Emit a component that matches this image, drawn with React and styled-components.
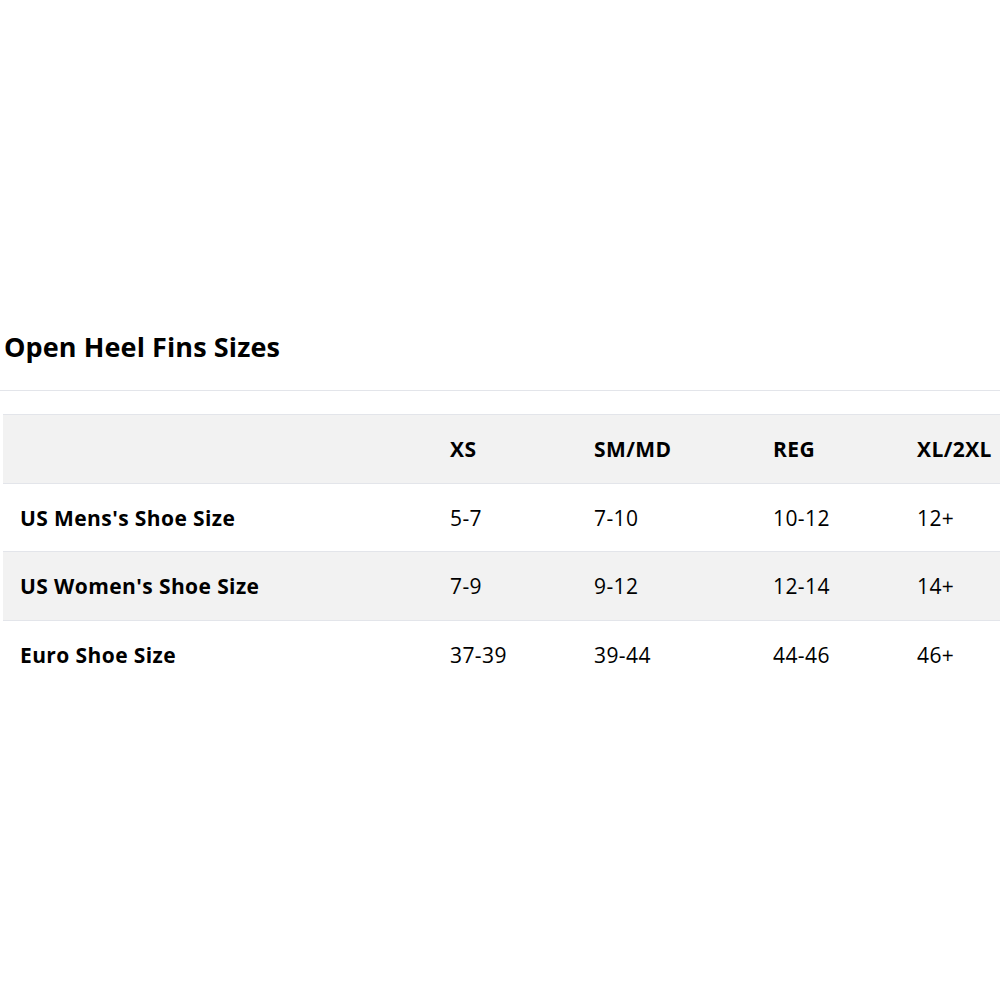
import React from "react";
import styled, { createGlobalStyle } from "styled-components";

const Global = createGlobalStyle`
  html, body { margin: 0; padding: 0; background: #fff; }
  body { width: 1000px; height: 1000px; overflow: hidden; font-family: "Open Sans", "Noto Sans", sans-serif; color: #000; }
`;

const Page = styled.div`
  padding-top: 326px;
`;

const Title = styled.h2`
  margin: 0 0 0 4px;
  font-size: 27px;
  font-weight: 700;
  line-height: 42px;
  letter-spacing: 0.1px;
`;

const Divider = styled.hr`
  margin: 22px 0 23px 0;
  border: 0;
  border-top: 1px solid #e3e5ea;
`;

const TableWrap = styled.div`
  margin-left: 3px;
  width: 1040px;
`;

const Table = styled.table`
  border-collapse: collapse;
  table-layout: fixed;
  width: 1040px;
  font-size: 21px;
  letter-spacing: 0.4px;
`;

const Row = styled.tr`
  background: ${(p) => (p.$shade ? "#f2f2f2" : "#fff")};
  border-top: 1px solid #e3e5ea;
  height: ${(p) => p.$h}px;
`;

const Cell = styled.td`
  padding: 0 0 0 17px;
  font-weight: ${(p) => (p.$bold ? 700 : 400)};
  vertical-align: middle;
  white-space: nowrap;
`;

const cols = [430, 144, 179, 144, 143];
const header = ["", "XS", "SM/MD", "REG", "XL/2XL"];
const rows = [
  ["US Mens's Shoe Size", "5-7", "7-10", "10-12", "12+"],
  ["US Women's Shoe Size", "7-9", "9-12", "12-14", "14+"],
  ["Euro Shoe Size", "37-39", "39-44", "44-46", "46+"],
];

export default function App() {
  return (
    <>
      <Global />
      <Page>
        <Title>Open Heel Fins Sizes</Title>
        <Divider />
        <TableWrap>
          <Table>
            <colgroup>
              {cols.map((w, i) => (
                <col key={i} style={{ width: w }} />
              ))}
            </colgroup>
            <tbody>
              <Row $shade $h={69}>
                {header.map((h, i) => (
                  <Cell key={i} $bold>
                    {h}
                  </Cell>
                ))}
              </Row>
              {rows.map((r, ri) => (
                <Row key={ri} $shade={ri % 2 === 1} $h={ri === 0 ? 68 : 69}>
                  {r.map((c, i) => (
                    <Cell key={i} $bold={i === 0}>
                      {c}
                    </Cell>
                  ))}
                </Row>
              ))}
            </tbody>
          </Table>
        </TableWrap>
      </Page>
    </>
  );
}
